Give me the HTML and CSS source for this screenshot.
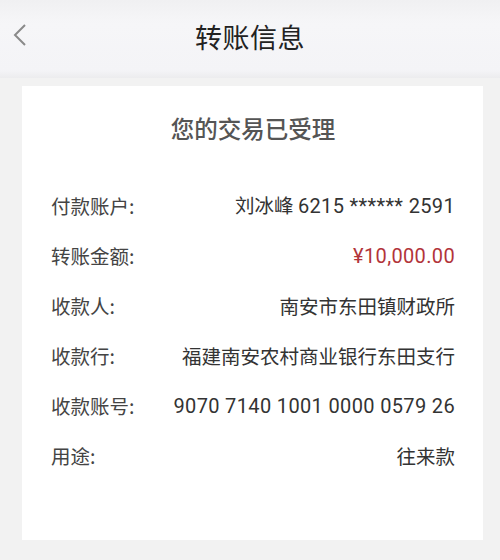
FILE: index.html
```html
<!DOCTYPE html>
<html lang="zh-CN">
<head>
<meta charset="utf-8">
<link rel="stylesheet" href="styles.css">
</head>
<body>
<div class="page">
  <header class="topbar">
    <span class="back">
      <svg width="16" height="24" viewBox="0 0 16 24"><path d="M13 2 L3 12 L13 22" fill="none" stroke="#8a8a8a" stroke-width="2"/></svg>
    </span>
    <h1 class="title">转账信息</h1>
  </header>
  <main class="card">
    <h2 class="card-title">您的交易已受理</h2>
    <div class="rows">
      <div class="row"><span class="label">付款账户:</span><span class="value">刘冰峰 <span class="num">6215 ****** 2591</span></span></div>
      <div class="row"><span class="label">转账金额:</span><span class="value amount num">¥10,000.00</span></div>
      <div class="row"><span class="label">收款人:</span><span class="value">南安市东田镇财政所</span></div>
      <div class="row"><span class="label">收款行:</span><span class="value">福建南安农村商业银行东田支行</span></div>
      <div class="row"><span class="label">收款账号:</span><span class="value num">9070 7140 1001 0000 0579 26</span></div>
      <div class="row"><span class="label">用途:</span><span class="value">往来款</span></div>
    </div>
  </main>
</div>
</body>
</html>
```

FILE: styles.css
```css
* { box-sizing: border-box; margin: 0; padding: 0; }
html, body { width: 500px; height: 560px; overflow: hidden; }
body {
  background: #f2f2f2;
  font-family: "Noto Sans CJK SC", "Noto Sans", sans-serif;
  color: #333;
}
.page { display: flex; flex-direction: column; height: 560px; }
.topbar {
  position: relative;
  height: 78px;
  background: linear-gradient(#f0f0f2, #f6f6f8 30%, #f4f4f7 90%, #ececee);
  display: flex;
  align-items: center;
  justify-content: center;
  padding-bottom: 6px;
}
.back {
  position: absolute;
  left: 12px;
  top: 23px;
  display: flex;
}
.title {
  font-size: 27px;
  font-weight: 400;
  color: #222;
  letter-spacing: 0.5px;
}
.card {
  margin: 8px 17px 0 22px;
  background: #fff;
  flex: 1;
  margin-bottom: 20px;
  padding: 26px 28px 0 29px;
}
.card-title {
  text-align: center;
  font-size: 23.5px;
  font-weight: 500;
  color: #555;
  line-height: 32px;
  margin-bottom: 46px;
}
.rows { display: flex; flex-direction: column; gap: 20px; }
.row {
  display: flex;
  justify-content: space-between;
  align-items: center;
  font-size: 19.5px;
  line-height: 30px;
}
.label { color: #444; }
.value { color: #333; text-align: right; white-space: nowrap; }
.num { font-family: Roboto, "Noto Sans CJK SC", sans-serif; letter-spacing: 0.35px; font-size: 20px; }
.amount { color: #b2343a; }
```
